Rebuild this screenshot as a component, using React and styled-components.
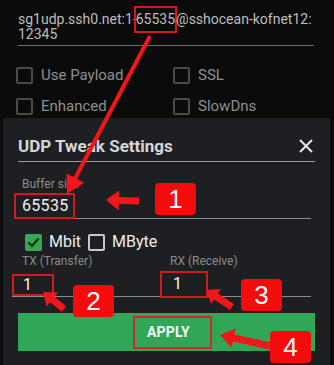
import React from "react";
import styled, { createGlobalStyle } from "styled-components";

const GlobalStyle = createGlobalStyle`
  html, body { margin: 0; padding: 0; background: #0b0b0c; }
  body { width: 334px; height: 365px; overflow: hidden; font-family: Roboto, "Noto Sans", Arial, sans-serif; }
  * { box-sizing: border-box; }
`;

const Page = styled.div`
  position: relative;
  width: 334px;
  height: 365px;
  overflow: hidden;
  background: #0b0b0c;
`;

const TopSection = styled.div`
  padding-top: 12px;
`;

const ServerField = styled.div`
  margin: 0 20px 0 18px;
  padding-bottom: 3px;
  border-bottom: 1px solid #6e6e6e;
  color: #bdbdbd;
  font-size: 14px;
  line-height: 15px;
  white-space: nowrap;
`;

const Mark = styled.span`
  border: 2px solid #d4181c;
  padding: 3px 0 4px 0;
  margin: 0 -1px 0 -3px;
`;

const CheckGrid = styled.div`
  display: grid;
  grid-template-columns: 157px 1fr;
  row-gap: 5px;
  padding-left: 16px;
  margin-top: 16px;
`;

const CheckItem = styled.label`
  display: flex;
  align-items: center;
  gap: 8px;
  height: 26px;
  color: #8e8e8e;
  font-size: 15px;
`;

const Box = styled.span`
  width: 17px;
  height: 17px;
  border-radius: 2px;
  border: 2px solid ${(p) => (p.$checked ? "#34a853" : p.$bright ? "#c9c9c9" : "#4a4a4a")};
  background: ${(p) => (p.$checked ? "#34a853" : "transparent")};
  display: flex;
  align-items: center;
  justify-content: center;
  flex-shrink: 0;
`;

const Dialog = styled.div`
  margin: -1px 4px 0 3px;
  background: #1e1f22;
  height: 260px;
`;

const Header = styled.div`
  margin: 0 15px 0 15px;
  padding-top: 15px;
  height: 44px;
  display: flex;
  align-items: center;
  justify-content: space-between;
  border-bottom: 1px solid #9a9a9a;
  padding-bottom: 2px;
`;

const Title = styled.h2`
  margin: 0;
  font-size: 17px;
  font-weight: 700;
  color: #d6d6d6;
  line-height: 28px;
`;

const CloseBtn = styled.span`
  display: flex;
  margin-right: 2px;
  margin-top: -1px;
`;

const Field = styled.div`
  margin: 15px 19px 0 11px;
  border-bottom: 1px solid #8a8a8a;
`;

const FieldLabel = styled.div`
  padding-left: 8px;
  font-size: 12px;
  line-height: 14px;
  color: #8b8b8b;
`;

const ValueRow = styled.div`
  margin-top: 2px;
  display: flex;
  margin-bottom: -1px;
`;

const ValueBox = styled.span`
  display: inline-block;
  border: 2px solid ${(p) => (p.$boxed ? "#cf1a1e" : "transparent")};
  padding: ${(p) => p.$pad || "2px 5px 2px 6px"};
  margin-bottom: ${(p) => p.$mb || "0"};
  font-size: 16px;
  line-height: 18px;
  color: #f2f2f2;
  letter-spacing: 0.3px;
`;

const UnitRow = styled.div`
  display: flex;
  align-items: center;
  gap: 7px;
  margin: 14px 0 0 22px;
`;

const Unit = styled.label`
  display: flex;
  align-items: center;
  gap: 7px;
  font-size: 16px;
  color: #ededed;
  line-height: 18px;
`;

const RateGrid = styled.div`
  display: grid;
  grid-template-columns: 148px 1fr;
  margin: 3px 19px 0 9px;
  border-bottom: 1px solid #8a8a8a;
`;

const RateCol = styled.div`
  display: flex;
  flex-direction: column;
  align-items: flex-start;
`;

const RateLabel = styled.div`
  padding-left: 10px;
  font-size: 12px;
  line-height: 14px;
  color: #8b8b8b;
  margin-bottom: ${(p) => p.$mb || "6px"};
`;

const ApplyButton = styled.button`
  display: flex;
  align-items: center;
  justify-content: center;
  width: calc(100% - 30px);
  margin: 16px 15px 0 15px;
  height: 38px;
  border: none;
  background: #31a657;
  padding: 0;
  cursor: pointer;
`;

const ApplyLabel = styled.span`
  display: flex;
  align-items: center;
  width: 79px;
  height: 33px;
  padding-left: 12px;
  border: 2px solid #d42a26;
  color: #f4f4f4;
  font-family: Roboto, Arial, sans-serif;
  font-weight: 700;
  font-size: 14px;
  letter-spacing: 0.2px;
  margin-left: 12px;
`;

const Overlay = styled.svg`
  position: absolute;
  inset: 0;
  pointer-events: none;
`;

const Badge = styled.div`
  position: absolute;
  width: 41px;
  height: 32px;
  border-radius: 4px;
  background: #f40b0b;
  color: #fff;
  font-family: "Liberation Sans", Arial, sans-serif;
  font-size: 26px;
  display: flex;
  align-items: center;
  justify-content: center;
`;

function arrowPoints(tx, ty, hx, hy, w, L, H) {
  const dx = hx - tx;
  const dy = hy - ty;
  const len = Math.hypot(dx, dy);
  const ux = dx / len;
  const uy = dy / len;
  const px = -uy;
  const py = ux;
  const bx = hx - ux * L;
  const by = hy - uy * L;
  const pts = [
    [tx + px * w * 0.5, ty + py * w * 0.5],
    [bx + px * w * 0.5, by + py * w * 0.5],
    [bx + px * H, by + py * H],
    [hx, hy],
    [bx - px * H, by - py * H],
    [bx - px * w * 0.5, by - py * w * 0.5],
    [tx - px * w * 0.5, ty - py * w * 0.5],
  ];
  return pts.map((p) => p.map((v) => v.toFixed(1)).join(",")).join(" ");
}

const arrows = [
  { t: [150, 36], h: [67, 194], w: 4, L: 18, H: 10 },
  { t: [139, 201], h: [106, 200], w: 7, L: 13, H: 10 },
  { t: [64, 309], h: [43, 292], w: 7, L: 12, H: 9 },
  { t: [232, 307], h: [206, 290], w: 7, L: 12, H: 9 },
  { t: [270, 346], h: [220, 335], w: 7, L: 14, H: 10 },
];

const badges = [
  { n: "1", x: 155, y: 183 },
  { n: "2", x: 73, y: 285 },
  { n: "3", x: 241, y: 279 },
  { n: "4", x: 270, y: 331 },
];

const Check = () => (
  <svg width="13" height="11" viewBox="0 0 13 11">
    <path d="M1.5 5.5 L5 9 L11.5 1.5" fill="none" stroke="#0f2a17" strokeWidth="2.2" />
  </svg>
);

export default function App() {
  return (
    <>
      <GlobalStyle />
      <Page>
        <TopSection>
          <ServerField>
            sg1udp.ssh0.net:1-<Mark>65535</Mark>@sshocean-kofnet12:
            <br />
            12345
          </ServerField>
          <CheckGrid>
            <CheckItem><Box />Use Payload</CheckItem>
            <CheckItem><Box />SSL</CheckItem>
            <CheckItem><Box />Enhanced</CheckItem>
            <CheckItem><Box />SlowDns</CheckItem>
          </CheckGrid>
        </TopSection>
        <Dialog>
          <Header>
            <Title>UDP Tweak Settings</Title>
            <CloseBtn>
              <svg width="14" height="14" viewBox="0 0 14 14">
                <path d="M1 1 L13 13 M13 1 L1 13" stroke="#e6e6e6" strokeWidth="2" />
              </svg>
            </CloseBtn>
          </Header>
          <Field>
            <FieldLabel>Buffer size</FieldLabel>
            <ValueRow>
              <ValueBox $boxed>65535</ValueBox>
            </ValueRow>
          </Field>
          <UnitRow>
            <Unit><Box $checked><Check /></Box>Mbit</Unit>
            <Unit><Box $bright />MByte</Unit>
          </UnitRow>
          <RateGrid>
            <RateCol>
              <RateLabel $mb="6px">TX (Transfer)</RateLabel>
              <ValueBox $boxed $pad="0px 20px 0px 9px">1</ValueBox>
            </RateCol>
            <RateCol>
              <RateLabel $mb="3px">RX (Receive)</RateLabel>
              <ValueBox $boxed $pad="2px 24px 3px 11px" $mb="-2px">1</ValueBox>
            </RateCol>
          </RateGrid>
          <ApplyButton>
            <ApplyLabel>APPLY</ApplyLabel>
          </ApplyButton>
        </Dialog>
        <Overlay width="334" height="365" viewBox="0 0 334 365">
          {arrows.map((a, i) => (
            <polygon key={i} points={arrowPoints(a.t[0], a.t[1], a.h[0], a.h[1], a.w, a.L, a.H)} fill="#f2161a" />
          ))}
        </Overlay>
        {badges.map((b) => (
          <Badge key={b.n} style={{ left: b.x, top: b.y }}>{b.n}</Badge>
        ))}
      </Page>
    </>
  );
}
